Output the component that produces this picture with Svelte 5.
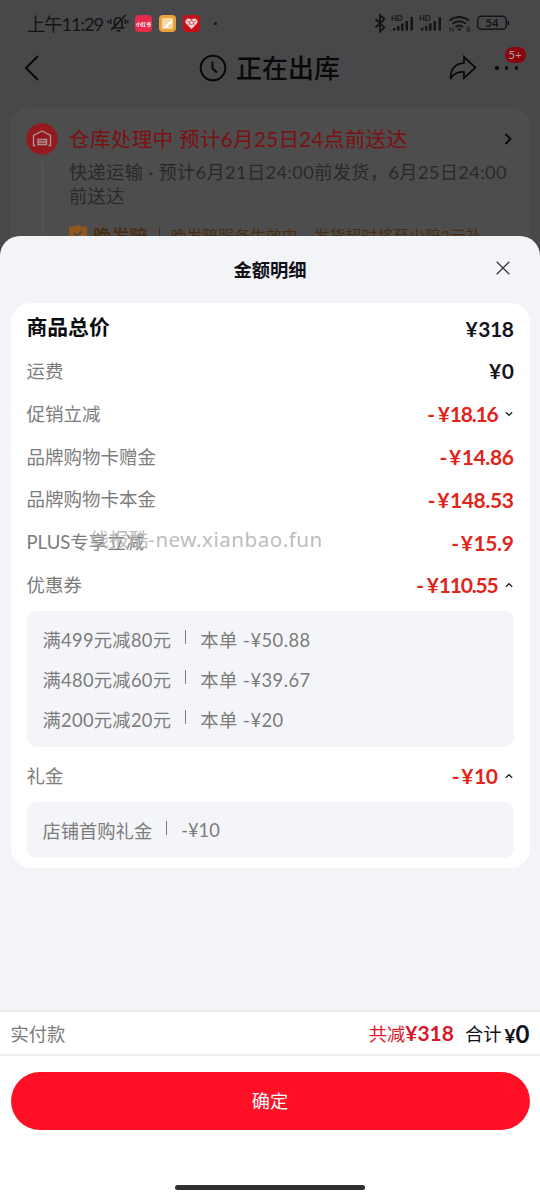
<script lang="ts">
  type Detail = { name: string; value: string };
  type Row = {
    label: string;
    amount: string;
    minus?: boolean;
    total?: boolean;
    tight?: boolean;
    arrow?: "up" | "down";
    details?: Detail[];
  };

  const rows: Row[] = [
    { label: "商品总价", amount: "318", total: true },
    { label: "运费", amount: "0" },
    { label: "促销立减", amount: "18.16", minus: true, tight: true, arrow: "down" },
    { label: "品牌购物卡赠金", amount: "14.86", minus: true },
    { label: "品牌购物卡本金", amount: "148.53", minus: true },
    { label: "PLUS专享立减", amount: "15.9", minus: true },
    {
      label: "优惠券",
      amount: "110.55",
      minus: true,
      tight: true,
      arrow: "up",
      details: [
        { name: "满499元减80元", value: "本单 -¥50.88" },
        { name: "满480元减60元", value: "本单 -¥39.67" },
        { name: "满200元减20元", value: "本单 -¥20" },
      ],
    },
    {
      label: "礼金",
      amount: "10",
      minus: true,
      arrow: "up",
      details: [{ name: "店铺首购礼金", value: "-¥10" }],
    },
  ];
</script>

<div class="screen">
  <div class="page">
    <div class="status-bar">
      <span class="time">上午11:29</span>
      <svg class="bell" width="22" height="20" viewBox="0 0 22 20">
        <path d="M4.500 15h13M6.500 15l1-2V8.500a3.700 3.700 0 0 1 7.400 0V13l1 2M9.500 17.800h4M4 17.500 18.500 2M3.700 6v5M1.300 7.300v3M18.300 6v5M20.700 7.300v3" />
      </svg>
      <span class="app"><b>小红书</b></span>
      <svg class="app-svg" width="17" height="17" viewBox="0 0 17 17">
        <rect width="17" height="17" rx="4" fill="#e9a13b" />
        <rect x="3" y="3" width="11" height="11" rx="1.500" fill="#f8d79a" />
        <path d="M13 4v5c-3 .2-4 1.500-4.200 4H4.500Q4 13 4 12.500Z" fill="#fffaf0" />
      </svg>
      <svg class="app-svg" width="17" height="17" viewBox="0 0 17 17">
        <rect width="17" height="17" rx="4" fill="#c60f18" />
        <path d="M8.500 14 3 8.500C.8 5.500 5 1.500 8.500 4.800 12 1.500 16.200 5.500 14 8.500Z" fill="#f5d5d5" />
        <path d="m4 5.500 2 2 2.500-2 2.500 2 2-2M5 9.500l2-1 1.500 1.500L10 8.500l2 1" fill="none" stroke="#c60f18" stroke-width=".8" />
      </svg>
      <i class="more-dot"></i>
      <svg class="signals" width="136" height="20" viewBox="0 0 136 20">
        <g fill="none" stroke="#151516" stroke-width="1.500">
          <path d="m1.500 6 9 8.500-4.500 4V2l4.500 4-9 8.500" stroke-width="1.800" />
          <path d="M75.500 7.500q9.500-7 19.500 0M78.500 10.800q6.500-5 13.500 0M81.500 14q3.500-2.800 7.500 0" stroke-width="2" />
          <rect x="103.700" y="3.200" width="28.500" height="13" rx="3.500" />
        </g>
        <g fill="#151516">
          <path d="M19 15h2.500v2.500H19zM23 13h2.500v4.500H23zM27 10.500h2.500v7H27zM31.500 8H34v9.500h-2.500zM36.500 4H39v13.500h-2.500z" />
          <path d="M47 15h2.500v2.500H47zM51 13h2.500v4.500H51zM55 10.500h2.500v7H55zM59.500 8H62v9.500h-2.500zM64.500 4H67v13.500h-2.500z" />
          <path d="m83 15.500 2.300 2.800 2.300-2.800zM133.500 8h1.500v4h-1.500z" />
          <path d="m75 16 1.200-1.500L77.400 16h-.8v2.500h-.8V16zM78.500 14.500h.8V17h.8l-1.200 1.500-1.200-1.500h.8z" />
          <text x="17" y="8" class="hd">HD</text>
          <text x="45" y="8" class="hd">HD</text>
          <text x="92" y="18.500" class="hd">6</text>
          <text x="111.300" y="13.800" class="battery">54</text>
        </g>
      </svg>
    </div>

    <div class="nav">
      <svg class="back" width="16" height="28" viewBox="0 0 16 28">
        <path d="M14 2 2 14l12 12" />
      </svg>
      <div class="nav-title">
        <svg width="28" height="28" viewBox="0 0 28 28">
          <circle cx="14" cy="14" r="12.300" />
          <path d="M13.500 7.500v7l4.500 4" />
        </svg>
        <span>正在出库</span>
      </div>
      <svg class="share" width="28" height="26" viewBox="0 0 28 26">
        <path d="M15 2 26.500 12.500 15 23v-6C8.500 16.500 4 19 1.500 24 1.500 14 6 8.500 15 8Z" />
      </svg>
      <div class="more">
        <i></i><i></i><i></i>
        <span class="badge">5+</span>
      </div>
    </div>

    <div class="order">
      <div class="rail">
        <svg width="32" height="32" viewBox="0 0 32 32">
          <circle cx="16" cy="16" r="15.700" fill="#95191f" />
          <path d="M9.500 22.500H7.500v-10L16 8l8.500 4.500v10h-2M12 21.500v-5h8.500v5zM12.500 19h8" />
        </svg>
        <i class="line"></i>
      </div>
      <div class="info">
        <div class="state">
          <span>仓库处理中 预计6月25日24点前送达</span>
          <svg width="8" height="12" viewBox="0 0 8 12"><path d="m1.500 1 5 5-5 5" /></svg>
        </div>
        <p class="desc first">快递运输 · 预计6月21日24:00前发货，6月25日24:00</p>
        <p class="desc">前送达</p>
        <div class="promise">
          <svg width="18" height="20" viewBox="0 0 18 20">
            <path d="M0 2q5 0 9-2 4 2 9 2v9q0 6-9 9-9-3-9-9Z" fill="#92571c" />
            <path d="m5 8 3 3 5-5" fill="none" stroke="#4c4c4d" stroke-width="1.800" />
          </svg>
          <b>晚发赔</b>
          <i></i>
          <span>晚发赔服务生效中，发货超时将至少赔3元补</span>
        </div>
      </div>
    </div>
  </div>

  <div class="sheet">
    <header>
      <h1>金额明细</h1>
      <svg class="close" width="14" height="14" viewBox="0 0 14 14">
        <path d="m.7.7 12.600 12.600M13.300.7.7 13.300" />
      </svg>
    </header>

    <section class="card">
      {#each rows as row}
        <div class="row" class:total={row.total}>
          <span class="label">{row.label}</span>
          <span class="amount" class:minus={row.minus} class:tight={row.tight}>
            {#if row.minus}<i>-</i>{/if}<em>¥</em>{row.amount}
          </span>
          {#if row.arrow}
            <svg class="arrow {row.arrow}" width="8" height="6" viewBox="0 0 8 6">
              <path d="m.8 4.700 3.200-3 3.200 3" />
            </svg>
          {/if}
        </div>
        {#if row.details}
          <div class="details">
            {#each row.details as item}
              <div class="detail">
                <span>{item.name}</span>
                <i></i>
                <span>{item.value}</span>
              </div>
            {/each}
          </div>
        {/if}
      {/each}
      <div class="watermark">线报酷<span>-new.xianbao.fun</span></div>
    </section>

    <footer>
      <div class="summary">
        <span class="paid">实付款</span>
        <span class="saved">共减<b>¥318</b></span>
        <span class="sum">合计</span>
        <b class="final"><small>¥</small>0</b>
      </div>
      <button type="button">确定</button>
      <div class="home-bar"></div>
    </footer>
  </div>
</div>

<style>
  :global(body) {
    margin: 0;
  }

  .screen {
    width: 540px;
    height: 1200px;
    display: flex;
    flex-direction: column;
    overflow: hidden;
    background: #48484a;
    font-family: Lato, "Noto Sans CJK SC", sans-serif;
    color: #101018;
  }

  .screen * {
    box-sizing: border-box;
  }

  svg {
    flex: none;
    display: block;
  }

  i,
  em {
    font-style: normal;
  }

  /* order page, dimmed behind the sheet */
  .page {
    height: 258px;
    flex: none;
    overflow: hidden;
    white-space: nowrap;
  }

  .status-bar {
    height: 46px;
    padding: 0 30px 0 27px;
    display: flex;
    align-items: center;
    color: #151516;
  }

  .time {
    width: 80px;
    padding-bottom: 1px;
    font-size: 18.2px;
    letter-spacing: -1px;
  }

  .bell {
    fill: none;
    stroke: #151516;
    stroke-width: 1.6;
  }

  .app {
    width: 17px;
    height: 17px;
    margin-left: 6px;
    border-radius: 4px;
    background: #e52a4c;
    display: flex;
    align-items: center;
    justify-content: center;
    color: #fff;
    font-size: 5px;
  }

  .app-svg {
    margin-left: 7px;
  }

  .more-dot {
    width: 3px;
    height: 3px;
    margin-left: 14px;
    border-radius: 50%;
    background: #151516;
  }

  .signals {
    margin-left: auto;
  }

  .hd {
    font: 700 7.5px Lato, sans-serif;
  }

  .battery {
    font: 700 11.5px Lato, sans-serif;
  }

  .nav {
    height: 44px;
    padding: 0 22px 0 24px;
    display: flex;
    align-items: center;
  }

  .back,
  .share,
  .nav-title svg {
    fill: none;
    stroke: #09090a;
    stroke-width: 2;
  }

  .nav-title {
    margin-left: 159px;
    display: flex;
    align-items: center;
    gap: 9px;
    font-size: 26px;
    font-weight: 500;
    color: #09090a;
  }

  .nav-title span {
    padding-bottom: 4px;
  }

  .share {
    margin-left: auto;
    stroke-width: 1.7;
  }

  .more {
    position: relative;
    width: 23px;
    margin-left: 18px;
    display: flex;
    justify-content: space-between;
  }

  .more i {
    width: 3.5px;
    height: 3.5px;
    border-radius: 50%;
    background: #09090a;
  }

  .badge {
    position: absolute;
    right: -7.5px;
    bottom: 7px;
    width: 21px;
    height: 16px;
    border-radius: 8px;
    background: #8b060c;
    color: #a8a0a0;
    font-size: 11.5px;
    line-height: 16px;
    text-align: center;
  }

  .order {
    height: 160px;
    margin: 18px 10px 0;
    padding: 15px 16px 0;
    border-radius: 18px;
    background: #4d4d4d;
    display: flex;
  }

  .rail {
    width: 32px;
    display: flex;
    flex-direction: column;
    align-items: center;
    gap: 6px;
  }

  .rail path {
    fill: none;
    stroke: #a79494;
    stroke-width: 1.4;
  }

  .rail .line {
    width: 1px;
    flex: 1;
    background: #575757;
  }

  .info {
    flex: 1;
    min-width: 0;
    margin-left: 11px;
  }

  .state {
    height: 32px;
    padding: 0 2px 2px 0;
    display: flex;
    align-items: center;
    justify-content: space-between;
    font-size: 20.6px;
    letter-spacing: 0.3px;
    color: #7d1012;
  }

  .state svg {
    margin-top: 2px;
    fill: none;
    stroke: #09090a;
    stroke-width: 1.8;
  }

  .desc {
    margin: 0;
    font-size: 18.2px;
    line-height: 24px;
    letter-spacing: 0.38px;
    color: #29292a;
  }

  .desc.first {
    padding-top: 5px;
  }

  .promise {
    margin-top: 13px;
    height: 28px;
    display: flex;
    align-items: center;
    font-size: 18.2px;
    color: #4a2c10;
  }

  .promise b {
    margin-left: 6px;
    font-weight: 500;
  }

  .promise i {
    width: 1px;
    height: 14px;
    margin: 0 11px;
    background: #4a2c10;
  }

  .promise span {
    font-size: 15.9px;
  }

  /* bottom sheet */
  .sheet {
    position: relative;
    flex: 1;
    margin-top: -22px;
    display: flex;
    flex-direction: column;
    border-radius: 20px 20px 0 0;
    background: #f3f4f8;
  }

  header {
    height: 67px;
    padding: 0 30px;
    display: grid;
    grid-template-columns: 1fr auto 1fr;
    align-items: center;
  }

  h1 {
    grid-column: 2;
    margin: 0;
    padding-bottom: 2px;
    font-size: 18.3px;
    font-weight: 700;
  }

  .close {
    justify-self: end;
    margin-top: -3px;
    fill: none;
    stroke: #35353a;
    stroke-width: 1.3;
  }

  .card {
    position: relative;
    height: 565px;
    margin: 0 10.5px;
    padding: 2.8px 16px 0;
    border-radius: 20px;
    background: #fff;
    white-space: nowrap;
  }

  .row {
    height: 42.8px;
    display: flex;
    align-items: center;
    justify-content: space-between;
  }

  .label {
    font-size: 18.5px;
    color: #7c7c7c;
  }

  .total .label {
    padding-bottom: 2px;
    font-size: 20.8px;
    font-weight: 700;
    color: #0c0c0e;
  }

  .amount {
    margin-left: auto;
    padding-top: 2px;
    font-size: 21px;
    font-weight: 700;
    letter-spacing: -0.4px;
    color: #15151f;
  }

  .amount em {
    margin-right: 1px;
  }

  .amount.minus {
    color: #e1251b;
  }

  .amount.tight {
    letter-spacing: -1.2px;
  }

  .amount i {
    margin-right: 2px;
    font-weight: 700;
  }

  .amount.tight i {
    margin-right: 4px;
  }

  .arrow {
    margin: 3px 1px 0 7px;
    fill: none;
    stroke: #22222c;
    stroke-width: 1.3;
  }

  .arrow.down {
    transform: rotate(180deg);
  }

  .details {
    margin: 5.5px 0 6.5px;
    padding: 8px 16px;
    border-radius: 9px;
    background: #f4f5f9;
  }

  .detail {
    height: 40px;
    display: flex;
    align-items: center;
    font-size: 18.3px;
    letter-spacing: 0.3px;
    color: #7c7c7c;
  }

  .detail span:last-child {
    letter-spacing: 0.5px;
  }

  .detail:only-child,
  .detail:only-child span:last-child {
    letter-spacing: 0;
  }

  .detail i {
    width: 1px;
    height: 14px;
    margin: -4px 14px 0;
    background: #7c7c7c;
  }

  .watermark {
    position: absolute;
    left: 79px;
    top: 222px;
    font-family: "Noto Sans", "Noto Sans CJK SC", sans-serif;
    font-size: 19.6px;
    line-height: 28px;
    color: rgba(176, 176, 176, 0.85);
  }

  .watermark span {
    font-size: 20.6px;
    letter-spacing: 0.48px;
  }

  footer {
    margin-top: auto;
    height: 190px;
    display: flex;
    flex-direction: column;
    background: #fff;
  }

  .summary {
    height: 46px;
    padding: 0 10.5px;
    border-top: 2px solid #ececee;
    border-bottom: 2px solid #ececee;
    display: flex;
    align-items: center;
    font-size: 18.3px;
  }

  .paid {
    margin-right: auto;
    color: #7c7c7c;
  }

  .saved {
    color: #d8192a;
  }

  .saved b {
    font-size: 21px;
  }

  .sum {
    margin: 0 3px 0 11px;
  }

  .final {
    font-size: 24px;
  }

  .final small {
    font-size: 19px;
  }

  button {
    height: 58px;
    margin: 16px 10.5px 0;
    padding: 0 0 2px;
    border: 0;
    border-radius: 29px;
    background: #ff1024;
    color: #fff;
    font: 400 18.2px Lato, "Noto Sans CJK SC", sans-serif;
  }

  .home-bar {
    width: 190px;
    height: 5px;
    margin: auto auto 10px;
    border-radius: 3px;
    background: #303030;
  }
</style>
